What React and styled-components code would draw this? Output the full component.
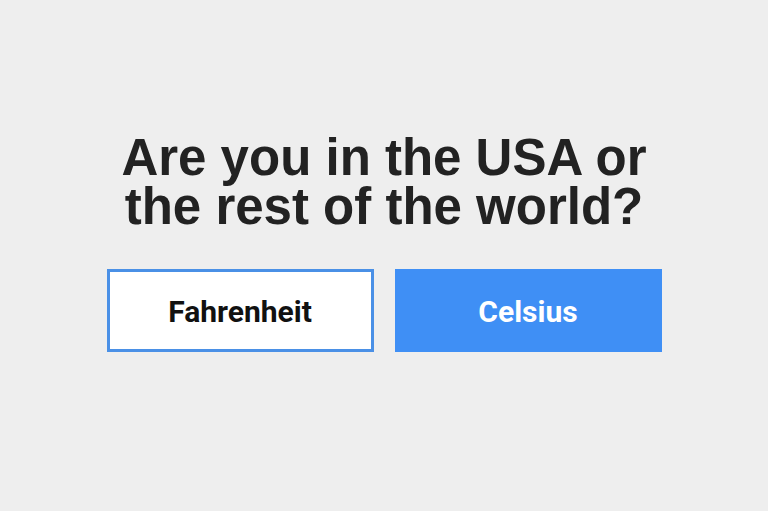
import React from "react";
import styled, { createGlobalStyle } from "styled-components";

const GlobalStyle = createGlobalStyle`
  html, body {
    margin: 0;
    padding: 0;
    background: #eeeeee;
  }
  #root {
    min-height: 100vh;
  }
`;

const Page = styled.main`
  min-height: 100vh;
  box-sizing: border-box;
  padding-top: 133px;
  display: flex;
  flex-direction: column;
  align-items: center;
  background: #eeeeee;
`;

const Question = styled.h1`
  margin: 0;
  font-family: "Liberation Sans", Arial, Helvetica, sans-serif;
  font-weight: 700;
  font-size: 51px;
  line-height: 49px;
  color: #222222;
  text-align: center;
`;

const Choices = styled.div`
  margin-top: 38px;
  display: flex;
  gap: 21px;
`;

const Choice = styled.button`
  box-sizing: border-box;
  width: 267px;
  height: 83px;
  margin: 0;
  padding: 2px 0 0;
  display: flex;
  align-items: center;
  justify-content: center;
  font-family: Roboto, "Liberation Sans", sans-serif;
  font-weight: 700;
  font-size: 30px;
  cursor: pointer;
  border: 3px solid ${(p) => (p.$primary ? "#3f8ff5" : "#4a90e6")};
  background: ${(p) => (p.$primary ? "#3f8ff5" : "#ffffff")};
  color: ${(p) => (p.$primary ? "#ffffff" : "#111111")};
`;

export default function App() {
  return (
    <>
      <GlobalStyle />
      <Page>
        <Question>
          Are you in the USA or
          <br />
          the rest of the world?
        </Question>
        <Choices>
          <Choice type="button">Fahrenheit</Choice>
          <Choice type="button" $primary>
            Celsius
          </Choice>
        </Choices>
      </Page>
    </>
  );
}
